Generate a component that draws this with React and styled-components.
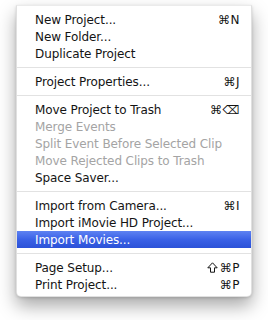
import React from "react";
import styled, { createGlobalStyle } from "styled-components";

const Global = createGlobalStyle`
  html, body { margin: 0; padding: 0; background: #ffffff; }
  body { font-family: "DejaVu Sans", "Liberation Sans", sans-serif; }
`;

const Page = styled.div`
  width: 268px;
  height: 320px;
  padding: 5px 0 0 16px;
  box-sizing: border-box;
`;

const Menu = styled.div`
  width: 236px;
  box-sizing: border-box;
  padding: 5px 0 3px;
  background: #ffffff;
  border: 1px solid rgba(0, 0, 0, 0.12);
  border-top-color: rgba(0, 0, 0, 0.08);
  border-radius: 0 0 5px 5px;
  box-shadow: 0 9px 18px rgba(0, 0, 0, 0.34), 0 1px 3px rgba(0, 0, 0, 0.15);
`;

const Item = styled.div`
  height: 17px;
  display: flex;
  align-items: center;
  justify-content: space-between;
  padding: 0 11px 0 18px;
  font-size: 12px;
  letter-spacing: -0.1px;
  color: ${(p) => (p.$active ? "#ffffff" : p.$disabled ? "#a4a4a4" : "#141414")};
  background: ${(p) =>
    p.$active ? "linear-gradient(#5e82f2, #3a61e6 50%, #2c52d8)" : "transparent"};
  white-space: nowrap;
`;

const Key = styled.span`
  display: flex;
  align-items: center;
  gap: 1px;
  font-size: 12px;
  letter-spacing: 0.5px;
`;

const ShiftIcon = styled.svg`
  width: 11px;
  height: 11px;
  margin-right: 1px;
`;

const Separator = styled.div`
  height: 11px;
  display: flex;
  align-items: center;
  &::after {
    content: "";
    flex: 1;
    height: 1px;
    background: #e2e2e2;
  }
`;

const Shift = () => (
  <ShiftIcon viewBox="0 0 11 11">
    <path
      d="M5.5 0.8 L10.2 5.8 H7.5 V10.2 H3.5 V5.8 H0.8 Z"
      fill="none"
      stroke="currentColor"
      strokeWidth="1"
      strokeLinejoin="miter"
    />
  </ShiftIcon>
);

const groups = [
  [
    { label: "New Project...", key: "⌘N" },
    { label: "New Folder..." },
    { label: "Duplicate Project" },
  ],
  [{ label: "Project Properties...", key: "⌘J" }],
  [
    { label: "Move Project to Trash", key: "⌘⌫" },
    { label: "Merge Events", disabled: true },
    { label: "Split Event Before Selected Clip", disabled: true },
    { label: "Move Rejected Clips to Trash", disabled: true },
    { label: "Space Saver..." },
  ],
  [
    { label: "Import from Camera...", key: "⌘I" },
    { label: "Import iMovie HD Project..." },
    { label: "Import Movies...", active: true },
  ],
  [
    { label: "Page Setup...", key: "⌘P", shift: true },
    { label: "Print Project...", key: "⌘P" },
  ],
];

export default function App() {
  return (
    <>
      <Global />
      <Page>
        <Menu>
          {groups.map((g, gi) => (
            <React.Fragment key={gi}>
              {gi > 0 && <Separator />}
              {g.map((it) => (
                <Item key={it.label} $active={it.active} $disabled={it.disabled}>
                  <span>{it.label}</span>
                  {it.key && (
                    <Key>
                      {it.shift && <Shift />}
                      {it.key}
                    </Key>
                  )}
                </Item>
              ))}
            </React.Fragment>
          ))}
        </Menu>
      </Page>
    </>
  );
}
